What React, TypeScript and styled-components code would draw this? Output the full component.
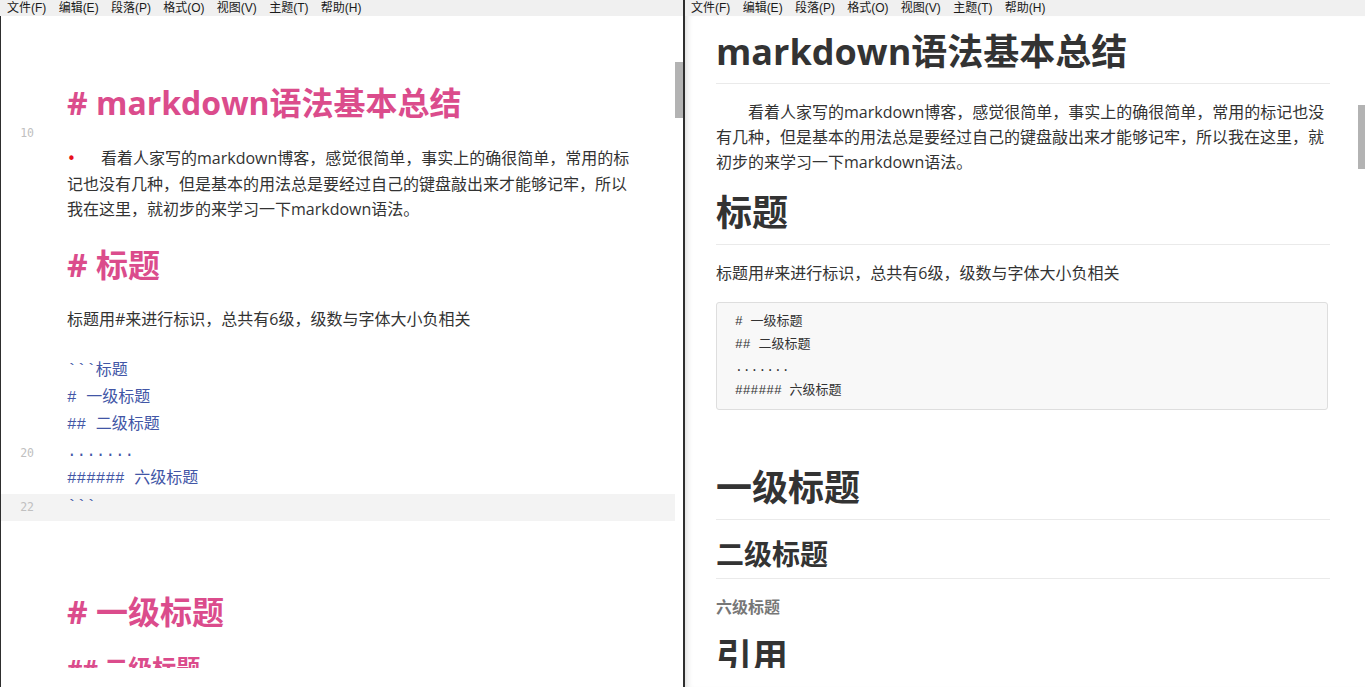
import React from "react";
import styled, { createGlobalStyle } from "styled-components";

const GlobalStyle = createGlobalStyle`
  html, body {
    margin: 0;
    padding: 0;
    background: #fff;
    overflow: hidden;
  }
`;

const menus = ["文件(F)", "编辑(E)", "段落(P)", "格式(O)", "视图(V)", "主题(T)", "帮助(H)"];

const sans = `"Open Sans", "Noto Sans CJK SC", sans-serif`;
const mono = `"Liberation Mono", "Noto Sans CJK SC", monospace`;

function Menu({ offset }: { offset: number }) {
  return (
    <MenuBar $offset={offset}>
      {menus.map((m) => (
        <MenuItem key={m}>{m}</MenuItem>
      ))}
    </MenuBar>
  );
}

type Line =
  | { kind: "blank"; h: number; num?: string }
  | { kind: "h1"; text: string }
  | { kind: "h2"; text: string }
  | { kind: "para"; text: string; dot?: boolean }
  | { kind: "code"; text: string; num?: string; active?: boolean };

const source: Line[] = [
  { kind: "h1", text: "# markdown语法基本总结" },
  { kind: "blank", h: 27, num: "10" },
  {
    kind: "para",
    dot: true,
    text: "\u3000看着人家写的markdown博客，感觉很简单，事实上的确很简单，常用的标记也没有几种，但是基本的用法总是要经过自己的键盘敲出来才能够记牢，所以我在这里，就初步的来学习一下markdown语法。",
  },
  { kind: "blank", h: 25.6 },
  { kind: "h1", text: "# 标题" },
  { kind: "blank", h: 25.6 },
  { kind: "para", text: "标题用#来进行标识，总共有6级，级数与字体大小负相关" },
  { kind: "blank", h: 25 },
  { kind: "code", text: "```标题" },
  { kind: "code", text: "# 一级标题" },
  { kind: "code", text: "## 二级标题" },
  { kind: "code", text: ".......", num: "20" },
  { kind: "code", text: "###### 六级标题" },
  { kind: "code", text: "```", num: "22", active: true },
  { kind: "blank", h: 25 },
  { kind: "blank", h: 25 },
  { kind: "blank", h: 24.5 },
  { kind: "h1", text: "# 一级标题" },
  { kind: "blank", h: 25.6 },
  { kind: "h2", text: "## 二级标题" },
];

function SourceLine({ line }: { line: Line }) {
  switch (line.kind) {
    case "blank":
      return (
        <Row $h={line.h}>
          <Gutter>{line.num}</Gutter>
          <span />
        </Row>
      );
    case "h1":
      return (
        <Row>
          <Gutter />
          <SourceHeading $size={32}>{line.text}</SourceHeading>
        </Row>
      );
    case "h2":
      return (
        <Row>
          <Gutter />
          <SourceHeading $size={24}>{line.text}</SourceHeading>
        </Row>
      );
    case "para":
      return (
        <Row>
          <Gutter />
          <SourceText>
            {line.dot && <SpecialChar>•</SpecialChar>}
            {line.text}
          </SourceText>
        </Row>
      );
    case "code":
      return (
        <Row $active={line.active}>
          <Gutter>{line.num}</Gutter>
          <CodeLine>{line.text}</CodeLine>
        </Row>
      );
  }
}

export default function App() {
  return (
    <Page>
      <GlobalStyle />
      <EditorWindow>
        <Menu offset={1} />
        <EditorBody>
          <Viewport>
            <Lines>
              {source.map((l, i) => (
                <SourceLine key={i} line={l} />
              ))}
            </Lines>
            <ScrollTrack $w={8}>
              <Thumb $top={46} $h={56} />
            </ScrollTrack>
          </Viewport>
        </EditorBody>
      </EditorWindow>

      <PreviewWindow>
        <Menu offset={0} />
        <PreviewBody>
          <Viewport>
            <ArticleWrap>
              <Article>
                <H1>markdown语法基本总结</H1>
                <Para>
                  {"\u3000\u3000看着人家写的markdown博客，感觉很简单，事实上的确很简单，常用的标记也没有几种，但是基本的用法总是要经过自己的键盘敲出来才能够记牢，所以我在这里，就初步的来学习一下markdown语法。"}
                </Para>
                <H1>标题</H1>
                <Para>标题用#来进行标识，总共有6级，级数与字体大小负相关</Para>
                <CodeBlock>
                  <div># 一级标题</div>
                  <div>## 二级标题</div>
                  <div>.......</div>
                  <div>###### 六级标题</div>
                </CodeBlock>
                <H1 $gap={56.5}>一级标题</H1>
                <H2>二级标题</H2>
                <H6>六级标题</H6>
                <H1 $plain>引用</H1>
              </Article>
            </ArticleWrap>
            <ScrollTrack $w={7}>
              <Thumb $top={89} $h={64} />
            </ScrollTrack>
          </Viewport>
        </PreviewBody>
      </PreviewWindow>
    </Page>
  );
}

const Page = styled.div`
  display: flex;
  width: 1365px;
  height: 687px;
  overflow: hidden;
  background: #fff;
`;

const EditorWindow = styled.div`
  width: 685px;
  flex: none;
  display: flex;
  flex-direction: column;
  box-sizing: border-box;
  border-right: 2px solid #2e2e2e;
`;

const PreviewWindow = styled.div`
  flex: 1;
  display: flex;
  flex-direction: column;
  min-width: 0;
`;

const MenuBar = styled.div<{ $offset: number }>`
  height: 16px;
  flex: none;
  display: flex;
  align-items: center;
  padding-left: ${(p) => p.$offset}px;
  background: #f0f0f0;
  font-family: "Liberation Sans", "Noto Sans CJK SC", sans-serif;
  font-size: 12px;
  color: #1a1a1a;
`;

const MenuItem = styled.span`
  padding: 0 6px;
  line-height: 16px;
  margin-right: 0.3px;
`;

const EditorBody = styled.div`
  flex: 1;
  border-left: 1px solid #2e2e2e;
  display: flex;
  flex-direction: column;
`;

const PreviewBody = styled.div`
  flex: 1;
  display: flex;
  flex-direction: column;
  box-shadow: inset 7px 0 6px -5px rgba(0, 0, 0, 0.14);
`;

const Viewport = styled.div`
  height: 652px;
  flex: none;
  display: flex;
  overflow: hidden;
`;

const Lines = styled.div`
  width: 674px;
  flex: none;
  padding-top: 70px;
  overflow: hidden;
`;

const Row = styled.div<{ $h?: number; $active?: boolean }>`
  display: grid;
  grid-template-columns: 66px 572px;
  align-items: center;
  ${(p) => (p.$h ? `height: ${p.$h}px;` : "")}
  background: ${(p) => (p.$active ? "#f3f3f3" : "transparent")};
`;

const Gutter = styled.span`
  box-sizing: border-box;
  padding-right: 33px;
  text-align: right;
  font-family: "DejaVu Sans Mono", monospace;
  font-size: 11.5px;
  line-height: 14px;
  color: #c0c0c0;
  align-self: center;
`;

const SourceHeading = styled.div<{ $size: number }>`
  font-family: ${sans};
  font-weight: 700;
  font-size: ${(p) => p.$size}px;
  line-height: ${(p) => (p.$size > 30 ? 33 : 28)}px;
  color: #db4c8c;
  white-space: nowrap;
`;

const SourceText = styled.div`
  font-family: ${sans};
  font-size: 16px;
  line-height: 25.6px;
  color: #333;
`;

const SpecialChar = styled.span`
  display: inline-block;
  width: 18px;
  color: #e8101a;
  font-family: "DejaVu Sans", sans-serif;
  font-size: 15px;
  line-height: 16px;
  vertical-align: 0;
`;

const CodeLine = styled.div`
  font-family: ${mono};
  font-size: 16px;
  line-height: 27.2px;
  color: #4256a6;
  white-space: pre;
`;

const ScrollTrack = styled.div<{ $w: number }>`
  width: ${(p) => p.$w}px;
  flex: none;
  display: flex;
  flex-direction: column;
`;

const Thumb = styled.div<{ $top: number; $h: number }>`
  margin-top: ${(p) => p.$top}px;
  height: ${(p) => p.$h}px;
  background: #b3b3b3;
`;

const ArticleWrap = styled.div`
  flex: 1;
  padding: 13.5px 0 0 31px;
  overflow: hidden;
`;

const Article = styled.div`
  width: 614px;
  font-family: ${sans};
  color: #333;
`;

const H1 = styled.h1<{ $gap?: number; $plain?: boolean }>`
  margin: ${(p) => (p.$gap ?? 0)}px 0 16px;
  font-size: 36px;
  line-height: 43px;
  font-weight: 700;
  padding-bottom: ${(p) => (p.$plain ? 0 : 10)}px;
  border-bottom: ${(p) => (p.$plain ? "none" : "1px solid #eaeaea")};
  white-space: nowrap;
`;

const H2 = styled.h2`
  margin: 17px 0 17px;
  font-size: 28px;
  line-height: 34px;
  font-weight: 700;
  padding-bottom: 7px;
  border-bottom: 1px solid #eaeaea;
`;

const H6 = styled.h6`
  margin: 0 0 16.5px;
  font-size: 16px;
  line-height: 22px;
  font-weight: 700;
  color: #777;
`;

const Para = styled.p`
  margin: 0 0 16px;
  font-size: 16px;
  line-height: 25px;
`;

const CodeBlock = styled.div`
  box-sizing: border-box;
  width: 612px;
  padding: 7px 18px;
  background: #f8f8f8;
  border: 1px solid #dedede;
  border-radius: 3px;
  font-family: ${mono};
  font-size: 13px;
  line-height: 23px;
  color: #333;
  white-space: pre;
`;
